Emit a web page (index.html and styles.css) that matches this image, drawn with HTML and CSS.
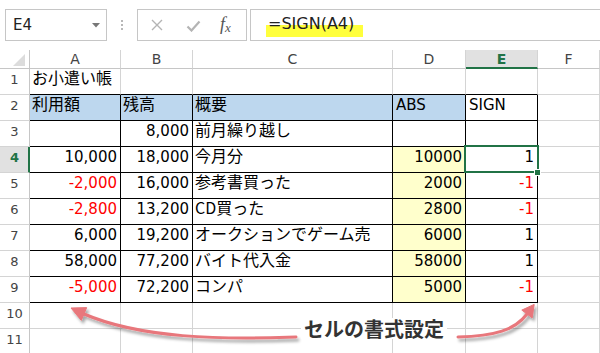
FILE: index.html
```html
<!DOCTYPE html>
<html lang="ja">
<head>
<meta charset="utf-8">
<title>SIGN</title>
<link rel="stylesheet" href="styles.css">
</head>
<body>
<div class="page">
  <div class="fbar">
    <div class="namebox"><span class="nb-text">E4</span>
      <svg class="dd" width="8" height="5" viewBox="0 0 8 5"><path d="M0 0H8L4 4.5Z" fill="#777"/></svg>
    </div>
    <div class="grip"><i></i><i></i><i></i></div>
    <div class="btns">
      <svg width="14" height="14" viewBox="0 0 14 14"><path d="M2 2L12 12M12 2L2 12" stroke="#b4b4b4" stroke-width="1.4"/></svg>
      <svg width="15" height="12" viewBox="0 0 15 12"><path d="M1.5 6.5L5.5 10.5L13.5 1.5" stroke="#b4b4b4" stroke-width="2.2" fill="none"/></svg>
      <span class="fx">f<sub>x</sub></span>
    </div>
    <div class="finput"><span class="hl">=SIGN(A4)</span></div>
  </div>

  <div class="sheet">
    <div class="corner"><svg width="12" height="12" viewBox="0 0 12 12"><path d="M12 0V12H0Z" fill="#dcdcdc"/></svg></div>
    <div class="ch">A</div><div class="ch">B</div><div class="ch">C</div><div class="ch">D</div><div class="ch sel">E</div><div class="ch">F</div>

    <div class="rh">1</div>
    <div class="c tb jp">お小遣い帳</div><div class="c tb"></div><div class="c tb"></div><div class="c tb"></div><div class="c tb"></div><div class="c"></div>

    <div class="rh">2</div>
    <div class="c t jp blue">利用額</div><div class="c t jp blue">残高</div><div class="c t jp blue">概要</div><div class="c t blue">ABS</div><div class="c t">SIGN</div><div class="c"></div>

    <div class="rh">3</div>
    <div class="c t"></div><div class="c t r">8,000</div><div class="c t jp">前月繰り越し</div><div class="c t"></div><div class="c t"></div><div class="c"></div>

    <div class="rh rsel">4</div>
    <div class="c t r">10,000</div><div class="c t r">18,000</div><div class="c t jp">今月分</div><div class="c t r yel">10000</div><div class="c t r active">1<span class="selbox"></span><span class="handle"></span></div><div class="c"></div>

    <div class="rh">5</div>
    <div class="c t r neg">-2,000</div><div class="c t r">16,000</div><div class="c t jp">参考書買った</div><div class="c t r yel">2000</div><div class="c t r neg">-1</div><div class="c"></div>

    <div class="rh">6</div>
    <div class="c t r neg">-2,800</div><div class="c t r">13,200</div><div class="c t jp">CD買った</div><div class="c t r yel">2800</div><div class="c t r neg">-1</div><div class="c"></div>

    <div class="rh">7</div>
    <div class="c t r">6,000</div><div class="c t r">19,200</div><div class="c t jp">オークションでゲーム売</div><div class="c t r yel">6000</div><div class="c t r">1</div><div class="c"></div>

    <div class="rh">8</div>
    <div class="c t r">58,000</div><div class="c t r">77,200</div><div class="c t jp">バイト代入金</div><div class="c t r yel">58000</div><div class="c t r">1</div><div class="c"></div>

    <div class="rh">9</div>
    <div class="c t r neg">-5,000</div><div class="c t r">72,200</div><div class="c t jp">コンパ</div><div class="c t r yel">5000</div><div class="c t r neg">-1</div><div class="c"></div>

    <div class="rh">10</div>
    <div class="c"></div><div class="c"></div><div class="c"></div><div class="c"></div><div class="c"></div><div class="c"></div>

    <div class="rh">11</div>
    <div class="c"></div><div class="c"></div><div class="c"></div><div class="c"></div><div class="c"></div><div class="c"></div>
  </div>

  <svg class="arrows" width="600" height="353" viewBox="0 0 600 353">
    <defs>
      <filter id="sh" x="-10%" y="-50%" width="120%" height="200%">
        <feDropShadow dx="2" dy="3" stdDeviation="1.6" flood-color="#000" flood-opacity="0.35"/>
      </filter>
    </defs>
    <g filter="url(#sh)" fill="#e8777c" stroke="#e8777c">
      <path d="M296 337C220 340 140 338 84 314" fill="none" stroke-width="3" stroke-linecap="round"/>
      <path d="M71 308L86.7 307.6L81.3 320.4Z" stroke-width="1" stroke-linejoin="round"/>
      <path d="M458 337C495 336 515 330 527 314" fill="none" stroke-width="3" stroke-linecap="round"/>
      <path d="M534.2 304.4L532.2 317.9L521.8 310.1Z" stroke-width="1" stroke-linejoin="round"/>
    </g>
  </svg>
  <div class="note">セルの書式設定</div>
</div>
</body>
</html>
```
FILE: styles.css
```css
html, body {
  margin: 0;
  padding: 0;
  background: #fff;
}
.page {
  position: relative;
  width: 600px;
  height: 353px;
  overflow: hidden;
  background: #fff;
}
.fbar {
  display: flex;
  align-items: flex-start;
  height: 50px;
  box-sizing: border-box;
  padding: 9px 0 0 5px;
}
.namebox {
  box-sizing: border-box;
  width: 102px;
  height: 32px;
  border: 1px solid #c6c6c6;
  display: flex;
  align-items: center;
  justify-content: space-between;
  padding: 0 6px 0 7px;
  font-family: "DejaVu Sans", sans-serif;
  font-size: 15px;
  color: #222;
}
.dd { margin-top: 1px; }
.grip {
  width: 30px;
  height: 32px;
  display: flex;
  flex-direction: column;
  align-items: center;
  justify-content: center;
  gap: 2px;
}
.grip i {
  display: block;
  width: 2px;
  height: 2px;
  background: #b8b8b8;
}
.btns {
  box-sizing: border-box;
  width: 110px;
  height: 32px;
  border: 1px solid #c6c6c6;
  display: flex;
  align-items: center;
  padding: 0 0 0 12px;
}
.btns svg:first-child { margin-right: 22px; }
.btns svg:nth-child(2) { margin-right: 19px; margin-top: 2px; }
.fx {
  font-family: "Liberation Serif", serif;
  font-style: italic;
  font-size: 18px;
  color: #555;
  line-height: 1;
  margin-top: -2px;
}
.fx sub {
  font-size: 13px;
  vertical-align: -2px;
}
.finput {
  flex: 1;
  margin-left: 3px;
  box-sizing: border-box;
  height: 32px;
  border: 1px solid #c6c6c6;
  border-right: none;
  display: flex;
  align-items: flex-start;
}
.hl {
  display: inline-block;
  margin: 2px 0 0 15px;
  padding: 0 9px 0 2px;
  height: 25px;
  line-height: 24px;
  font-family: "DejaVu Sans", sans-serif;
  font-size: 16px;
  color: #222;
  background: linear-gradient(to bottom, transparent 0, transparent 13px, #ffff3d 13px, #ffff3d 100%);
}

.sheet {
  display: grid;
  grid-template-columns: 30px 91px 72px 200px 73px 72px 1fr;
  grid-template-rows: 19px repeat(11, 26px);
}
.corner, .ch, .rh, .c {
  box-sizing: border-box;
  border-right: 1px solid #d4d4d4;
  border-bottom: 1px solid #d4d4d4;
}
.corner {
  border-right-color: #c6c6c6;
  border-bottom-color: #c6c6c6;
  display: flex;
  align-items: flex-end;
  justify-content: flex-end;
  padding: 0 4px 2px 0;
}
.ch {
  border-bottom-color: #c6c6c6;
  display: flex;
  justify-content: center;
  align-items: flex-start;
  padding-top: 2px;
  font-family: "DejaVu Sans", sans-serif;
  font-size: 14px;
  line-height: 15px;
  color: #444;
}
.ch.sel {
  background: #e1e1e1;
  border-bottom: 2px solid #217346;
  color: #217346;
  font-weight: bold;
}
.rh {
  border-right-color: #c6c6c6;
  display: flex;
  justify-content: center;
  align-items: flex-end;
  padding-bottom: 7px;
  font-family: "DejaVu Sans", sans-serif;
  font-size: 13px;
  line-height: 14px;
  color: #444;
}
.rh.rsel {
  background: #e1e1e1;
  border-right: 2px solid #217346;
  padding-left: 1px;
  color: #217346;
  font-weight: bold;
}
.c {
  display: flex;
  align-items: flex-end;
  padding: 0 3px 6px 3px;
  font-family: "DejaVu Sans", "Noto Sans CJK JP", sans-serif;
  font-size: 15px;
  line-height: 17px;
  color: #000;
  white-space: nowrap;
}
.c.jp {
  font-family: "Noto Sans CJK JP", sans-serif;
  font-size: 16px;
  padding-bottom: 8px;
  padding-left: 2px;
}
.c.t {
  border-right-color: #000;
  border-bottom-color: #000;
}
.c.tb {
  border-bottom-color: #000;
}
.c.r { justify-content: flex-end; }
.c.neg { color: #ff0000; }
.c.blue { background: #bdd7ee; }
.c.yel { background: #ffffcc; }
.c.active { position: relative; }
.selbox {
  position: absolute;
  left: -2px;
  top: -2px;
  width: 75px;
  height: 28px;
  box-sizing: border-box;
  border: 2px solid #217346;
}
.handle {
  position: absolute;
  left: 68px;
  top: 22px;
  width: 5px;
  height: 5px;
  background: #217346;
  border: 1px solid #fff;
}
.arrows {
  position: absolute;
  left: 0;
  top: 0;
  pointer-events: none;
}
.note {
  position: absolute;
  left: 301px;
  top: 318px;
  padding: 0 3px;
  background: #fff;
  font-family: "Noto Sans CJK JP", sans-serif;
  font-weight: bold;
  font-size: 20px;
  line-height: 21px;
  color: #333;
}
```
